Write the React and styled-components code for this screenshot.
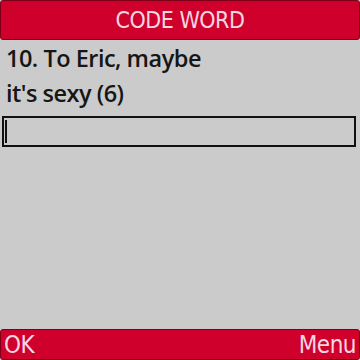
import React from 'react';
import styled, { createGlobalStyle } from 'styled-components';

const Global = createGlobalStyle`
  body {
    margin: 0;
    background: #cbcbcb;
  }
`;

const Screen = styled.div`
  width: 360px;
  height: 360px;
  display: flex;
  flex-direction: column;
  background: #cbcbcb;
  font-family: "DejaVu Sans Condensed", "Open Sans", sans-serif;
  overflow: hidden;
`;

const Bar = styled.div`
  box-sizing: border-box;
  height: ${(p) => p.h}px;
  background: #d0002c;
  border: 1px solid #7c0016;
  border-radius: 3px;
  color: #f6d6e0;
  display: flex;
  align-items: center;
  justify-content: ${(p) => p.justify || 'center'};
  padding: 0 3px;
  font-size: ${(p) => p.size || 23}px;
  letter-spacing: -0.5px;
`;

const Body = styled.div`
  flex: 1;
  padding: 0 2px;
`;

const Clue = styled.div`
  font-family: "Open Sans", sans-serif;
  font-weight: 600;
  font-size: 23.5px;
  line-height: 35px;
  color: #161616;
  padding-left: 4px;
  margin-top: 1px;
  letter-spacing: -0.5px;
`;

const Field = styled.div`
  box-sizing: border-box;
  height: 31px;
  margin: 5px 2px 0 0;
  border: 2px solid #111;
  padding: 2px 1px;
`;

const Caret = styled.div`
  width: 2px;
  height: 100%;
  background: #111;
`;

const App = () => (
  <Screen>
    <Global />
    <Bar h={40}>CODE WORD</Bar>
    <Body>
      <Clue>
        10. To Eric, maybe
        <br />
        it's sexy (6)
      </Clue>
      <Field>
        <Caret />
      </Field>
    </Body>
    <Bar h={31} size={24} justify="space-between">
      <span>OK</span>
      <span>Menu</span>
    </Bar>
  </Screen>
);

export default App;
